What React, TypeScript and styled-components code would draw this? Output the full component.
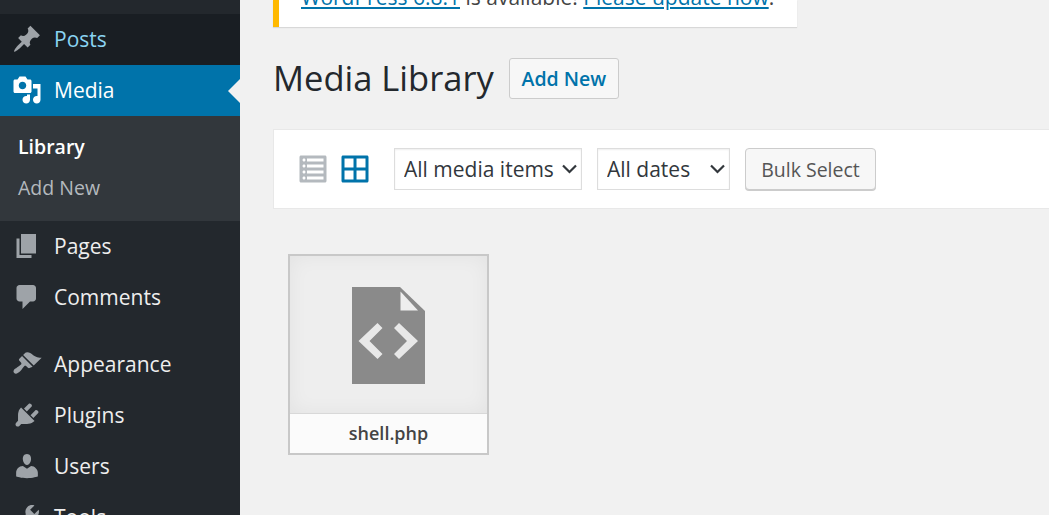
import styled, { createGlobalStyle } from "styled-components";

const GlobalStyle = createGlobalStyle`
  html, body {
    margin: 0;
    height: 100%;
    overflow: hidden;
    background: #f1f1f1;
    font-family: "Open Sans", sans-serif;
  }
  #root {
    height: 100%;
  }
`;

const Page = styled.div`
  display: flex;
  height: 515px;
  overflow: hidden;
`;

const Sidebar = styled.nav`
  width: 240px;
  flex-shrink: 0;
  background: #23282d;
  padding-top: 14px;
  overflow: hidden;
`;

const MenuItem = styled.a<{ $active?: boolean; $hover?: boolean; $gap?: boolean }>`
  position: relative;
  display: flex;
  align-items: center;
  box-sizing: border-box;
  height: 51px;
  padding-bottom: 2px;
  margin-top: ${(p) => (p.$gap ? "16px" : "0")};
  font-size: 21px;
  color: ${(p) => (p.$active ? "#fff" : p.$hover ? "#8ad4f2" : "#eee")};
  background: ${(p) => (p.$active ? "#0073aa" : p.$hover ? "#191e23" : "transparent")};
  flex-shrink: 0;
`;

const MenuIcon = styled.svg<{ $tone?: string }>`
  width: 30px;
  height: 30px;
  margin-left: 12px;
  margin-right: 12px;
  fill: ${(p) => p.$tone ?? "#9ea3a8"};
  flex-shrink: 0;
`;

const ActiveArrow = styled.span`
  position: absolute;
  right: 0;
  top: 50%;
  margin-top: -12px;
  border: 12px solid transparent;
  border-right-color: #f1f1f1;
  border-left-width: 0;
`;

const SubMenu = styled.div`
  display: flex;
  flex-direction: column;
  height: 105px;
  padding: 10px 0 0 18px;
  box-sizing: border-box;
  background: #32373c;
`;

const SubItem = styled.a<{ $current?: boolean }>`
  height: 41px;
  line-height: 41px;
  font-size: 19.5px;
  font-weight: ${(p) => (p.$current ? 600 : 400)};
  color: ${(p) => (p.$current ? "#fff" : "#b4b9be")};
`;

const Main = styled.main`
  flex: 1;
  min-width: 0;
  padding-left: 33px;
`;

const Notice = styled.div`
  display: flex;
  align-items: flex-end;
  width: 524px;
  height: 27px;
  box-sizing: border-box;
  padding: 0 0 15px 22px;
  overflow: hidden;
  background: #fff;
  border-left: 6px solid #ffb900;
  box-shadow: 0 1px 1px rgba(0, 0, 0, 0.1);
  font-size: 21px;
  line-height: 30px;
  color: #444;
  white-space: pre;
`;

const NoticeLink = styled.a`
  color: #0073aa;
  text-decoration: underline;
`;

const TitleRow = styled.header`
  display: flex;
  align-items: flex-start;
  margin-top: 31px;
  height: 71px;
`;

const Title = styled.h1`
  margin: 0 15px 0 0;
  font-size: 34.5px;
  font-weight: 400;
  line-height: 39px;
  color: #23282d;
`;

const AddButton = styled.a`
  box-sizing: border-box;
  height: 41px;
  width: 110px;
  line-height: 40px;
  text-align: center;
  font-size: 19.5px;
  font-weight: 600;
  color: #0073aa;
  background: #f7f7f7;
  border: 1px solid #ccc;
  border-radius: 3px;
`;

const Toolbar = styled.div`
  display: flex;
  align-items: center;
  box-sizing: border-box;
  height: 80px;
  padding-left: 24px;
  background: #fff;
  border: 1px solid #e8e8e8;
  margin-right: -20px;
`;

const ViewIcon = styled.svg<{ $current?: boolean }>`
  width: 30px;
  height: 30px;
  margin-right: ${(p) => (p.$current ? "24px" : "12px")};
  fill: ${(p) => (p.$current ? "#0073aa" : "#b4b9be")};
  flex-shrink: 0;
`;

const SelectWrap = styled.label<{ $width: number }>`
  position: relative;
  display: block;
  width: ${(p) => p.$width}px;
  height: 42px;
  margin-right: 15px;
  flex-shrink: 0;
`;

const Select = styled.select`
  width: 100%;
  height: 100%;
  box-sizing: border-box;
  appearance: none;
  padding: 0 0 0 9px;
  font-family: inherit;
  font-size: 21px;
  color: #32373c;
  background: #fff;
  border: 1px solid #ddd;
  border-radius: 0;
  box-shadow: inset 0 1px 2px rgba(0, 0, 0, 0.07);
`;

const Chevron = styled.svg`
  position: absolute;
  right: 4px;
  top: 12px;
  width: 18px;
  height: 18px;
  fill: none;
  stroke: #32373c;
  stroke-width: 2.2;
`;

const BulkButton = styled.button`
  box-sizing: border-box;
  width: 131px;
  height: 42px;
  padding: 0;
  font-family: inherit;
  font-size: 19.5px;
  color: #555;
  background: #f7f7f7;
  border: 1px solid #ccc;
  border-radius: 4px;
  box-shadow: 0 1px 0 #ccc;
`;

const Grid = styled.section`
  display: flex;
  padding: 45px 0 0 15px;
`;

const Attachment = styled.figure`
  display: flex;
  flex-direction: column;
  width: 201px;
  height: 201px;
  margin: 0;
  box-sizing: border-box;
  border: 2px solid #c8c8c8;
  background: #eee;
`;

const Thumb = styled.div`
  flex: 1;
  display: flex;
  justify-content: center;
  padding-top: 31px;
  box-shadow: inset 0 0 20px rgba(0, 0, 0, 0.05);
`;

const FileIcon = styled.svg`
  width: 73px;
  height: 97px;
`;

const Caption = styled.figcaption`
  height: 39px;
  line-height: 38px;
  text-align: center;
  font-size: 18px;
  font-weight: 600;
  color: #444;
  background: #fbfbfb;
  border-top: 1px solid #d8d8d8;
`;

const icons = {
  posts:
    "M10.44 3.02l1.82-1.82 6.36 6.35-1.83 1.82c-1.05-.68-2.48-.57-3.41.36l-.75.75c-.92.93-1.04 2.35-.35 3.41l-1.83 1.82-2.41-2.41-2.8 2.79c-.42.42-3.38 2.71-3.8 2.29s1.86-3.39 2.28-3.81l2.79-2.79L4.1 9.36l1.83-1.82c1.05.69 2.48.57 3.41-.36l.75-.75c.93-.92 1.04-2.35.35-3.41z",
  media:
    "M13 11V4c0-.55-.45-1-1-1h-1.67L9 1H5L3.67 3H2c-.55 0-1 .45-1 1v7c0 .55.45 1 1 1h10c.55 0 1-.45 1-1zM7 4.5c1.38 0 2.5 1.12 2.5 2.5S8.38 9.5 7 9.5 4.5 8.38 4.5 7 5.62 4.5 7 4.5zM14 6h5v10.5c0 1.38-1.12 2.5-2.5 2.5S14 17.88 14 16.5s1.12-2.5 2.5-2.5c.17 0 .34.02.5.05V9h-3V6zm-4 8.05V13h2v3.5c0 1.38-1.12 2.5-2.5 2.5S7 17.88 7 16.5 8.12 14 9.5 14c.17 0 .34.02.5.05z",
  pages: "M6 15V2h10v13H6zm-1 1h8v2H3V5h2v11z",
  comments:
    "M5 2h9c1.1 0 2 .9 2 2v7c0 1.1-.9 2-2 2h-2l-5 5v-5H5c-1.1 0-2-.9-2-2V4c0-1.1.9-2 2-2z",
  appearance:
    "M14.48 11.06L7.41 3.99l1.5-1.5c.5-.56 2.3-.47 3.51.32 1.21.8 1.43 1.28 2.91 2.1 1.18.64 2.45 1.26 4.45.85zm-.71.71L6.7 4.7 4.93 6.47c-.39.39-.39 1.02 0 1.41l1.06 1.06c.39.39.39 1.03 0 1.42-.6.6-1.43 1.11-2.21 1.69-.35.26-.7.53-1.01.84C1.43 13.23.4 14.97 1.47 16.03c1.06 1.06 2.8.03 4.14-1.3.32-.32.59-.67.84-1.01.58-.78 1.09-1.61 1.69-2.21.39-.39 1.03-.39 1.42 0l1.06 1.06c.39.39 1.02.39 1.41 0z",
  plugins:
    "M13.11 4.36L9.87 7.6 8 5.73l3.24-3.24c.35-.34 1.05-.2 1.56.32.52.51.66 1.21.31 1.55zm-8 1.77l.91-1.12 9.01 9.01-1.19.84c-.71.71-2.63 1.16-3.82 1.16H6.14L4.9 17.26c-.59.59-1.54.59-2.12 0-.59-.58-.59-1.53 0-2.12l1.24-1.24v-3.88c0-1.13.4-3.19 1.09-3.89zm7.26 3.97l3.24-3.24c.34-.35 1.04-.21 1.55.31.52.51.66 1.21.31 1.55l-3.24 3.25z",
  users:
    "M10 9.25c-2.27 0-2.73-3.44-2.73-3.44C7 4.02 7.82 2 9.97 2c2.16 0 2.98 2.02 2.71 3.81 0 0-.41 3.44-2.68 3.44zm0 2.57L12.72 10c2.39 0 4.52 2.33 4.52 4.53v2.49s-3.65 1.13-7.24 1.13c-3.65 0-7.24-1.13-7.24-1.13v-2.49c0-2.25 1.94-4.48 4.47-4.48z",
  tools:
    "M16.68 9.77c-1.34 1.34-3.3 1.67-4.95.99l-5.41 6.52c-.99.99-2.59.99-3.58 0s-.99-2.59 0-3.57l6.52-5.42c-.68-1.65-.35-3.61.99-4.95 1.28-1.28 3.12-1.62 4.72-1.06l-2.89 2.89 2.82 2.82 2.86-2.87c.53 1.58.18 3.39-1.08 4.65zM3.81 16.21c.4.39 1.04.39 1.43 0 .4-.4.4-1.04 0-1.43-.39-.4-1.03-.4-1.43 0-.39.39-.39 1.03 0 1.43z",
};

const listView =
  "M2 19h16c.55 0 1-.45 1-1V2c0-.55-.45-1-1-1H2c-.55 0-1 .45-1 1v16c0 .55.45 1 1 1zM4 3c.55 0 1 .45 1 1s-.45 1-1 1-1-.45-1-1 .45-1 1-1zm13 0v2H6V3h11zM4 7c.55 0 1 .45 1 1s-.45 1-1 1-1-.45-1-1 .45-1 1-1zm13 0v2H6V7h11zM4 11c.55 0 1 .45 1 1s-.45 1-1 1-1-.45-1-1 .45-1 1-1zm13 0v2H6v-2h11zM4 15c.55 0 1 .45 1 1s-.45 1-1 1-1-.45-1-1 .45-1 1-1zm13 0v2H6v-2h11z";
const gridView =
  "M2 1h16c.55 0 1 .45 1 1v16c0 .55-.45 1-1 1H2c-.55 0-1-.45-1-1V2c0-.55.45-1 1-1zm7.01 7.99v-6H3v6h6.01zm8 0v-6h-6v6h6zm-8 8.01v-6H3v6h6.01zm8 0v-6h-6v6h6z";

const Icon = ({ d, tone }: { d: string; tone?: string }) => (
  <MenuIcon viewBox="0 0 20 20" $tone={tone}>
    <path d={d} />
  </MenuIcon>
);

const DownChevron = () => (
  <Chevron viewBox="0 0 18 18">
    <path d="M3 5.5l6.5 6.5 6.5-6.5" />
  </Chevron>
);

const App = () => {
  return (
    <>
      <GlobalStyle />
      <Page>
        <Sidebar>
          <MenuItem $hover>
            <Icon d={icons.posts} />
            Posts
          </MenuItem>
          <MenuItem $active>
            <Icon d={icons.media} tone="#fff" />
            Media
            <ActiveArrow />
          </MenuItem>
          <SubMenu>
            <SubItem $current>Library</SubItem>
            <SubItem>Add New</SubItem>
          </SubMenu>
          <MenuItem>
            <Icon d={icons.pages} />
            Pages
          </MenuItem>
          <MenuItem>
            <Icon d={icons.comments} />
            Comments
          </MenuItem>
          <MenuItem $gap>
            <Icon d={icons.appearance} />
            Appearance
          </MenuItem>
          <MenuItem>
            <Icon d={icons.plugins} />
            Plugins
          </MenuItem>
          <MenuItem>
            <Icon d={icons.users} />
            Users
          </MenuItem>
          <MenuItem>
            <Icon d={icons.tools} />
            Tools
          </MenuItem>
        </Sidebar>
        <Main>
          <Notice>
            <NoticeLink>WordPress 6.8.1</NoticeLink> is available! <NoticeLink>Please update now</NoticeLink>.
          </Notice>
          <TitleRow>
            <Title>Media Library</Title>
            <AddButton>Add New</AddButton>
          </TitleRow>
          <Toolbar>
            <ViewIcon viewBox="0 0 20 20">
              <path d={listView} />
            </ViewIcon>
            <ViewIcon viewBox="0 0 20 20" $current>
              <path d={gridView} />
            </ViewIcon>
            <SelectWrap $width={188}>
              <Select defaultValue="all">
                <option value="all">All media items</option>
              </Select>
              <DownChevron />
            </SelectWrap>
            <SelectWrap $width={133}>
              <Select defaultValue="all">
                <option value="all">All dates</option>
              </Select>
              <DownChevron />
            </SelectWrap>
            <BulkButton>Bulk Select</BulkButton>
          </Toolbar>
          <Grid>
            <Attachment>
              <Thumb>
                <FileIcon viewBox="0 0 73 97">
                  <path d="M0 0h48l25 24v73H0z" fill="#8a8a8a" />
                  <path d="M48.5 4.5L66 23.5H48.5z" fill="#eee" />
                  <path
                    d="M25.5 36l5 5-13 13 13 13-5 5-19-18zM47 36l-5 5 13 13-13 13 5 5 19-18z"
                    fill="#e8e8e8"
                  />
                </FileIcon>
              </Thumb>
              <Caption>shell.php</Caption>
            </Attachment>
          </Grid>
        </Main>
      </Page>
    </>
  );
};

export default App;
